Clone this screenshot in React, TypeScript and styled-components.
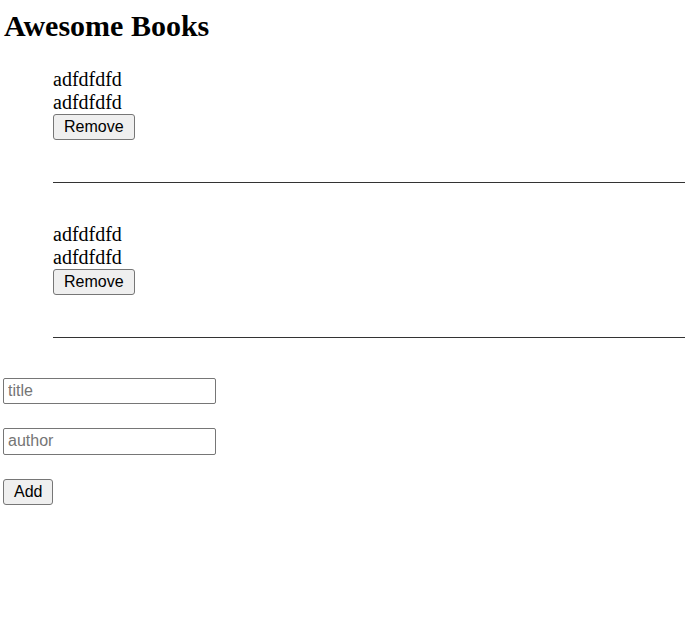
import styled, { createGlobalStyle } from "styled-components";

const books = [
  { id: 1, title: "adfdfdfd", author: "adfdfdfd" },
  { id: 2, title: "adfdfdfd", author: "adfdfdfd" },
];

const GlobalStyle = createGlobalStyle`
  html, body {
    margin: 0;
    padding: 0;
    background: #ffffff;
  }
  body {
    font-family: "Liberation Serif", "Times New Roman", serif;
    color: #000000;
  }
`;

const App = () => {
  return (
    <>
      <GlobalStyle />
      <Page>
        <Title>Awesome Books</Title>
        <BookList>
          {books.map((book) => (
            <Book key={book.id}>
              <Line>{book.title}</Line>
              <Line>{book.author}</Line>
              <Button>Remove</Button>
              <Divider />
            </Book>
          ))}
        </BookList>
        <Form onSubmit={(e) => e.preventDefault()}>
          <Input type="text" placeholder="title" />
          <Input type="text" placeholder="author" />
          <Button type="submit">Add</Button>
        </Form>
      </Page>
    </>
  );
};

export default App;

const Page = styled.div`
  display: flex;
  flex-direction: column;
  padding: 9px 0 0 3px;
`;

const Title = styled.h1`
  font-size: 30px;
  font-weight: bold;
  margin: 0 0 0 1px;
  line-height: 34px;
`;

const BookList = styled.div`
  display: flex;
  flex-direction: column;
  gap: 40.5px;
  margin-top: 25px;
  padding-left: 50px;
`;

const Book = styled.div`
  display: flex;
  flex-direction: column;
  align-items: flex-start;
`;

const Line = styled.div`
  font-size: 20px;
  line-height: 23px;
`;

const Button = styled.button`
  box-sizing: border-box;
  height: 26px;
  padding: 0 10px;
  font-family: "Liberation Sans", Arial, sans-serif;
  font-size: 16px;
  color: #000000;
  background: #efefef;
  border: 1px solid #767676;
  border-radius: 3px;
  cursor: pointer;
`;

const Divider = styled.hr`
  align-self: stretch;
  margin: 41.5px 0 0 0;
  border: none;
  border-top: 1px solid #333333;
  height: 0;
`;

const Form = styled.form`
  display: flex;
  flex-direction: column;
  align-items: flex-start;
  gap: 24px;
  margin-top: 40px;
`;

const Input = styled.input`
  box-sizing: border-box;
  width: 213px;
  height: 26.5px;
  padding: 1px 4px;
  font-family: "Liberation Sans", Arial, sans-serif;
  font-size: 16px;
  border: 1px solid #767676;
  border-radius: 2px;

  &::placeholder {
    color: #757575;
  }
`;
